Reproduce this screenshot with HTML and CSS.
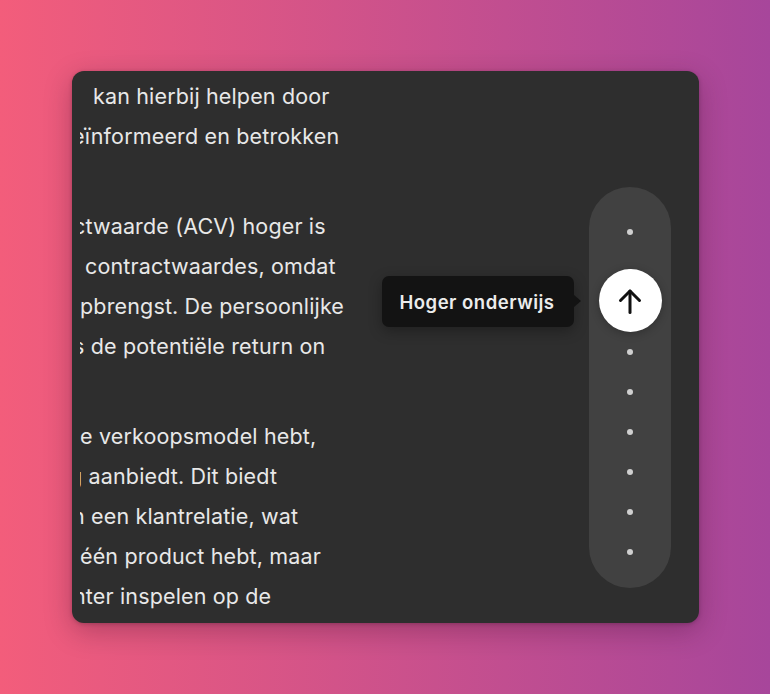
FILE: index.html
```html
<!DOCTYPE html>
<html lang="nl">
<head>
<meta charset="utf-8">
<title>Hoger onderwijs</title>
<link rel="stylesheet" href="styles.css">
</head>
<body>
<main class="card">
  <section class="reader">
    <div class="para">
      <div class="line o-k">kan hierbij helpen door</div>
      <div class="line o-e">eïnformeerd en betrokken</div>
    </div>
    <div class="para">
      <div class="line o-c">ctwaarde (ACV) hoger is</div>
      <div class="line o-sp">contractwaardes, omdat</div>
      <div class="line">pbrengst. De persoonlijke</div>
      <div class="line o-s">s de potentiële return on</div>
    </div>
    <div class="para">
      <div class="line">e verkoopsmodel hebt,</div>
      <div class="line o-g">g aanbiedt. Dit biedt</div>
      <div class="line o-n">n een klantrelatie, wat</div>
      <div class="line">één product hebt, maar</div>
      <div class="line o-nt">nter inspelen op de</div>
    </div>
  </section>
  <aside class="side">
    <nav class="rail">
      <span class="dot"></span>
      <span class="dot"></span>
      <span class="dot"></span>
      <span class="dot"></span>
      <span class="dot"></span>
      <span class="dot"></span>
      <span class="dot"></span>
      <span class="dot"></span>
      <span class="dot"></span>
      <button class="active" type="button" aria-label="Hoger onderwijs">
        <svg class="arrow" viewBox="0 0 26 26" width="26" height="26" aria-hidden="true">
          <path d="M13 24.5V3" />
          <path d="M3.5 12.5L13 3l9.5 9.5" />
        </svg>
        <span class="tip">Hoger onderwijs</span>
      </button>
    </nav>
  </aside>
</main>
</body>
</html>
```

FILE: styles.css
```css
html, body {
  margin: 0;
  padding: 0;
}

body {
  width: 770px;
  height: 694px;
  overflow: hidden;
  background: linear-gradient(90deg, #f35d7b 0%, #a7469b 100%);
  font-family: Inter, "Noto Sans", "Liberation Sans", sans-serif;
}

.card {
  box-sizing: border-box;
  width: 627px;
  height: 552px;
  margin: 71px 0 0 72px;
  background: #2e2e2e;
  border-radius: 12px;
  box-shadow: 0 8px 28px rgba(40, 0, 30, 0.28), 0 1px 4px rgba(0, 0, 0, 0.2);
  display: flex;
  overflow: hidden;
}

.reader {
  flex: 1;
  margin-left: 8px;
  padding-top: 5px;
  overflow: hidden;
  color: #e8e8e8;
  font-size: 21.5px;
  letter-spacing: 0.15px;
}

.para + .para {
  margin-top: 50px;
}

.line {
  height: 40px;
  line-height: 40px;
  white-space: nowrap;
}

.o-k { margin-left: 13px; }
.o-e { margin-left: -8px; }
.o-c { margin-left: -7px; }
.o-sp { margin-left: 5px; }
.o-s { margin-left: -7px; }
.o-g { margin-left: -11px; }
.o-n { margin-left: -8px; }
.o-nt { margin-left: -7px; }

.side {
  padding: 116px 28px 0 0;
}

.rail {
  position: relative;
  box-sizing: border-box;
  width: 82px;
  height: 401px;
  border-radius: 41px;
  background: #414141;
  padding-top: 42px;
  display: flex;
  flex-direction: column;
  align-items: center;
  gap: 34px;
}

.dot {
  width: 6px;
  height: 6px;
  border-radius: 50%;
  background: #cfcfcf;
  flex: none;
}

.active {
  position: absolute;
  left: 9.5px;
  top: 82px;
  width: 63px;
  height: 63px;
  padding: 0;
  border: none;
  border-radius: 50%;
  background: #ffffff;
  box-shadow: 0 2px 8px rgba(0, 0, 0, 0.25);
  display: flex;
  align-items: center;
  justify-content: center;
}

.arrow {
  fill: none;
  stroke: #111111;
  stroke-width: 3;
  stroke-linecap: round;
  stroke-linejoin: round;
}

.tip {
  position: absolute;
  right: calc(100% + 25px);
  top: 7px;
  box-sizing: border-box;
  height: 51px;
  width: 192px;
  padding-left: 18px;
  display: flex;
  align-items: center;
  background: #131313;
  border-radius: 7px;
  color: #ececec;
  font-family: Inter, "Noto Sans", "Liberation Sans", sans-serif;
  font-size: 18.5px;
  font-weight: 600;
  letter-spacing: 0.5px;
  white-space: nowrap;
  box-shadow: 0 4px 14px rgba(0, 0, 0, 0.3);
}

.tip::after {
  content: "";
  position: absolute;
  right: -7px;
  top: 19px;
  border-left: 7px solid #131313;
  border-top: 6px solid transparent;
  border-bottom: 6px solid transparent;
}
```
